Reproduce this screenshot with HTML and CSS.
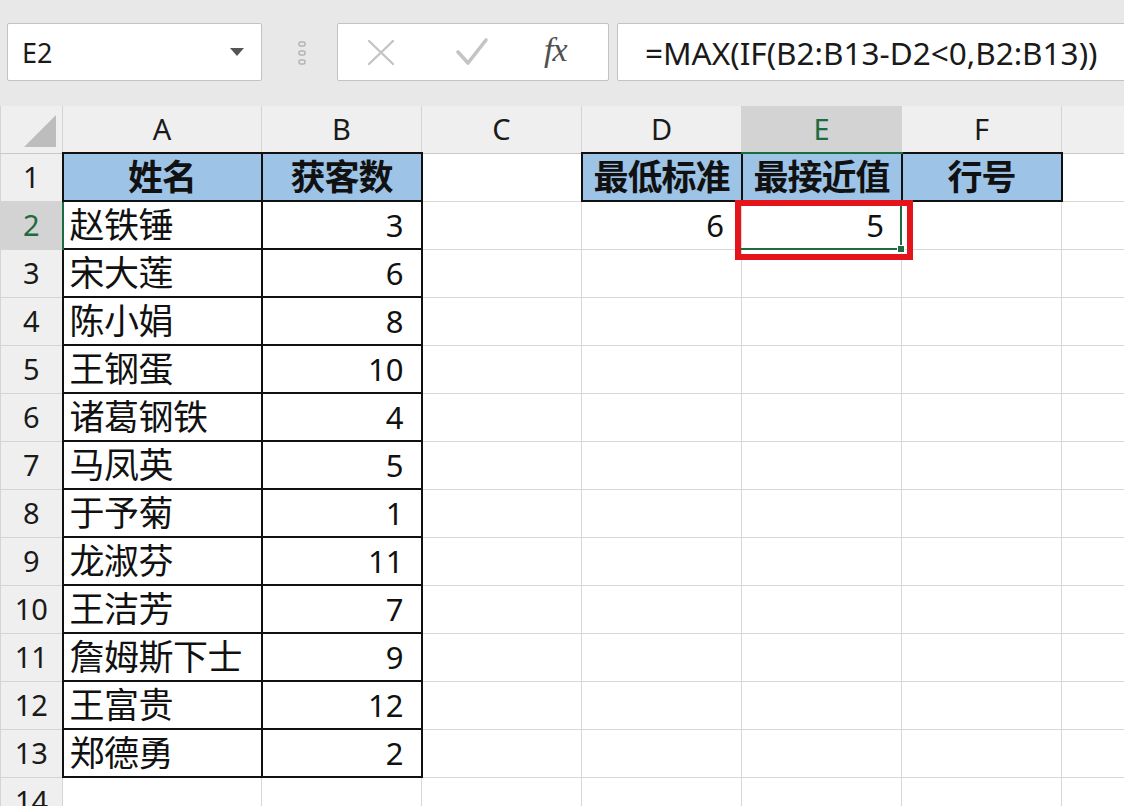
FILE: index.html
```html
<!DOCTYPE html>
<html lang="zh-CN">

<head>
    <meta charset="UTF-8">
    <meta name="viewport" content="width=device-width, initial-scale=1.0">
    <title>Excel</title>
    <link rel="stylesheet" href="styles.css">
</head>

<body>
    <div class="wrapper">
        <header class="bar">
            <div class="bar__name">
                <span class="bar__ref">E2</span>
                <svg class="bar__arrow" width="16" height="10" viewBox="0 0 16 10">
                    <path d="M1 1 H15 L8 9 Z" fill="#555"/>
                </svg>
            </div>
            <svg class="bar__grip" width="8" height="26" viewBox="0 0 8 26">
                <rect x="1" y="2" width="6" height="4" rx="1" fill="none" stroke="#9a9a9a" stroke-width="1"/>
                <rect x="1" y="11" width="6" height="4" rx="1" fill="none" stroke="#9a9a9a" stroke-width="1"/>
                <rect x="1" y="20" width="6" height="4" rx="1" fill="none" stroke="#9a9a9a" stroke-width="1"/>
            </svg>
            <div class="bar__btns">
                <svg class="bar__icon" width="30" height="30" viewBox="0 0 30 30">
                    <path d="M3 4 L27 27 M27 4 L3 27" stroke="#c4c4c4" stroke-width="2.4" stroke-linecap="round"/>
                </svg>
                <svg class="bar__icon bar__icon--ok" width="34" height="30" viewBox="0 0 34 30">
                    <path d="M3 15 L13 26 L31 3" fill="none" stroke="#c4c4c4" stroke-width="3.6" stroke-linecap="round" stroke-linejoin="round"/>
                </svg>
                <span class="bar__fx">fx</span>
            </div>
            <div class="bar__formula">=MAX(IF(B2:B13-D2&lt;0,B2:B13))</div>
        </header>

        <main class="sheet">
            <table class="grid">
                <colgroup>
                    <col class="col-row">
                    <col class="col-a">
                    <col class="col-n">
                    <col class="col-n">
                    <col class="col-n">
                    <col class="col-n">
                    <col class="col-n">
                    <col class="col-g">
                </colgroup>
                <thead>
                    <tr class="heads">
                        <th class="corner"><span class="corner__tri"></span></th>
                        <th>A</th>
                        <th>B</th>
                        <th>C</th>
                        <th>D</th>
                        <th class="heads__sel">E</th>
                        <th>F</th>
                        <th></th>
                    </tr>
                </thead>
                <tbody>
                    <tr>
                        <th class="num">1</th>
                        <td class="title box">姓名</td>
                        <td class="title box">获客数</td>
                        <td></td>
                        <td class="title box">最低标准</td>
                        <td class="title box">最接近值</td>
                        <td class="title box">行号</td>
                        <td></td>
                    </tr>
                    <tr>
                        <th class="num num--sel">2</th>
                        <td class="name box">赵铁锤</td>
                        <td class="val box">3</td>
                        <td></td>
                        <td class="val">6</td>
                        <td class="val active">5<span class="active__sel"></span><span class="active__ring"></span><span class="active__handle"></span></td>
                        <td></td>
                        <td></td>
                    </tr>
                    <tr><th class="num">3</th><td class="name box">宋大莲</td><td class="val box">6</td><td></td><td></td><td></td><td></td><td></td></tr>
                    <tr><th class="num">4</th><td class="name box">陈小娟</td><td class="val box">8</td><td></td><td></td><td></td><td></td><td></td></tr>
                    <tr><th class="num">5</th><td class="name box">王钢蛋</td><td class="val box">10</td><td></td><td></td><td></td><td></td><td></td></tr>
                    <tr><th class="num">6</th><td class="name box">诸葛钢铁</td><td class="val box">4</td><td></td><td></td><td></td><td></td><td></td></tr>
                    <tr><th class="num">7</th><td class="name box">马凤英</td><td class="val box">5</td><td></td><td></td><td></td><td></td><td></td></tr>
                    <tr><th class="num">8</th><td class="name box">于予菊</td><td class="val box">1</td><td></td><td></td><td></td><td></td><td></td></tr>
                    <tr><th class="num">9</th><td class="name box">龙淑芬</td><td class="val box">11</td><td></td><td></td><td></td><td></td><td></td></tr>
                    <tr><th class="num">10</th><td class="name box">王洁芳</td><td class="val box">7</td><td></td><td></td><td></td><td></td><td></td></tr>
                    <tr><th class="num">11</th><td class="name box">詹姆斯下士</td><td class="val box">9</td><td></td><td></td><td></td><td></td><td></td></tr>
                    <tr><th class="num">12</th><td class="name box">王富贵</td><td class="val box">12</td><td></td><td></td><td></td><td></td><td></td></tr>
                    <tr><th class="num">13</th><td class="name box">郑德勇</td><td class="val box">2</td><td></td><td></td><td></td><td></td><td></td></tr>
                    <tr><th class="num">14</th><td></td><td></td><td></td><td></td><td></td><td></td><td></td></tr>
                </tbody>
            </table>
        </main>
    </div>
</body>

</html>
```

FILE: styles.css
```css
* {
    padding: 0;
    margin: 0;
    box-sizing: border-box;
}

body {
    font-family: 'Noto Sans', 'Noto Sans CJK SC', sans-serif;
    color: #111;
    background: #fff;
    overflow: hidden;
}

.wrapper {
    width: 1124px;
    height: 806px;
    overflow: hidden;
}

/* formula bar */
.bar {
    height: 106px;
    background: #e8e8e8;
    display: flex;
    align-items: flex-start;
    padding-top: 23px;
    padding-left: 7px;
}

.bar__name,
.bar__btns,
.bar__formula {
    height: 58px;
    background: #fff;
    border: 1px solid #c3c3c3;
    border-radius: 2px;
    display: flex;
    align-items: center;
}

.bar__name {
    width: 255px;
    padding: 0 16px 0 14px;
    justify-content: space-between;
}

.bar__ref {
    font-size: 27px;
    color: #1a1a1a;
}

.bar__grip {
    margin: 17px 31px 0 36px;
}

.bar__btns {
    width: 272px;
    padding: 0 0 0 28px;
}

.bar__icon--ok {
    margin-left: 59px;
}

.bar__fx {
    font-family: 'Liberation Serif', serif;
    font-style: italic;
    font-size: 34px;
    color: #505050;
    letter-spacing: -1px;
    margin-left: 55px;
    margin-bottom: 4px;
}

.bar__formula {
    flex: 1;
    margin-left: 8px;
    margin-right: -40px;
    padding-left: 27px;
    font-size: 31.5px;
    color: #1a1a1a;
}

/* sheet */
.grid {
    border-collapse: collapse;
    table-layout: fixed;
    width: 1124px;
}

.col-row { width: 62px; }
.col-a { width: 199px; }
.col-n { width: 160px; }
.col-g { width: 63px; }

.grid td,
.grid th {
    border: 1px solid #d8d8d8;
    height: 48px;
    line-height: 40px;
    padding: 0;
    white-space: nowrap;
    overflow: visible;
}

.grid .heads th {
    height: 47px;
    background: #efefef;
    font-weight: 400;
    font-size: 29px;
    color: #1a1a1a;
    border-color: #d4d4d4;
    border-top: none;
    border-bottom-color: #c8c8c8;
}

.grid .heads .heads__sel {
    background: #d3d3d3;
    color: #1d6b40;
    border-bottom: 2px solid #1d6b40;
}

.corner {
    position: relative;
}

.corner__tri {
    position: absolute;
    right: 6px;
    bottom: 6px;
    width: 0;
    height: 0;
    border-left: 32px solid transparent;
    border-bottom: 32px solid #bdbdbd;
}

.num {
    background: #efefef;
    font-weight: 400;
    font-size: 29px;
    color: #1a1a1a;
    text-align: center;
}

.grid .num {
    border-color: #d4d4d4;
}

.num--sel {
    background: #d3d3d3;
    color: #1d6b40;
}

.grid .num--sel {
    border-right: 2px solid #1d6b40;
}

.grid .box {
    border: 2px solid #111;
}

.title {
    background: #9dc3e6;
    font-weight: 700;
    font-size: 35px;
    text-align: center;
    letter-spacing: -1px;
}

.name {
    font-size: 35px;
    padding-left: 6px !important;
    letter-spacing: -0.5px;
}

.val {
    font-size: 31px;
    text-align: right;
    padding-right: 17px !important;
}

.active {
    position: relative;
}

.active__sel {
    position: absolute;
    left: -1px;
    top: -1px;
    right: -1px;
    bottom: -1px;
    border-right: 2px solid #1d6b40;
    border-bottom: 2px solid #1d6b40;
}

.active__ring {
    position: absolute;
    left: -7px;
    top: -2px;
    width: 178px;
    height: 60px;
    border: 6px solid #e5141b;
}

.active__handle {
    position: absolute;
    right: -4px;
    bottom: -4px;
    width: 8px;
    height: 8px;
    background: #1d6b40;
    border: 1px solid #fff;
}
```
